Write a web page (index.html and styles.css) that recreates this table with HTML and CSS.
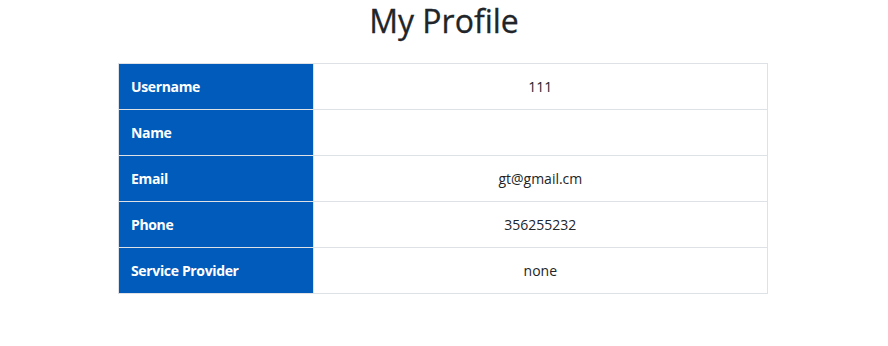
FILE: index.html
```html
<!DOCTYPE html>
<html>
<head>
<meta charset="utf-8">
<link rel="stylesheet" href="styles.css">
</head>
<body>
<div class="page">
  <h2 class="title">My Profile</h2>
  <table class="profile">
    <tr><th>Username</th><td>111</td></tr>
    <tr><th>Name</th><td></td></tr>
    <tr><th>Email</th><td>gt@gmail.cm</td></tr>
    <tr><th>Phone</th><td>356255232</td></tr>
    <tr><th>Service Provider</th><td>none</td></tr>
  </table>
</div>
</body>
</html>
```

FILE: styles.css
```css
html, body {
  margin: 0;
  padding: 0;
  background: #fff;
}
body {
  font-family: "Open Sans", "Noto Sans", sans-serif;
  color: #212529;
  font-size: 14px;
  line-height: 1.5;
}
.page {
  display: flex;
  flex-direction: column;
  align-items: center;
}
.title {
  font-size: 32px;
  font-weight: 500;
  line-height: 38px;
  margin: 0;
  padding-top: 2px;
  height: 61px;
  -webkit-text-stroke: 0.3px #212529;
}
.profile {
  width: 650px;
  border-collapse: collapse;
  margin-left: -2px;
}
.profile th, .profile td {
  padding: 12px;
  height: 21px;
  border: 1px solid #dee2e6;
}
.profile th {
  width: 30%;
  box-sizing: border-box;
  background: #005bbb;
  color: #fff;
  text-align: left;
  font-weight: 700;
  letter-spacing: -0.35px;
}
.profile td {
  text-align: center;
}
```
